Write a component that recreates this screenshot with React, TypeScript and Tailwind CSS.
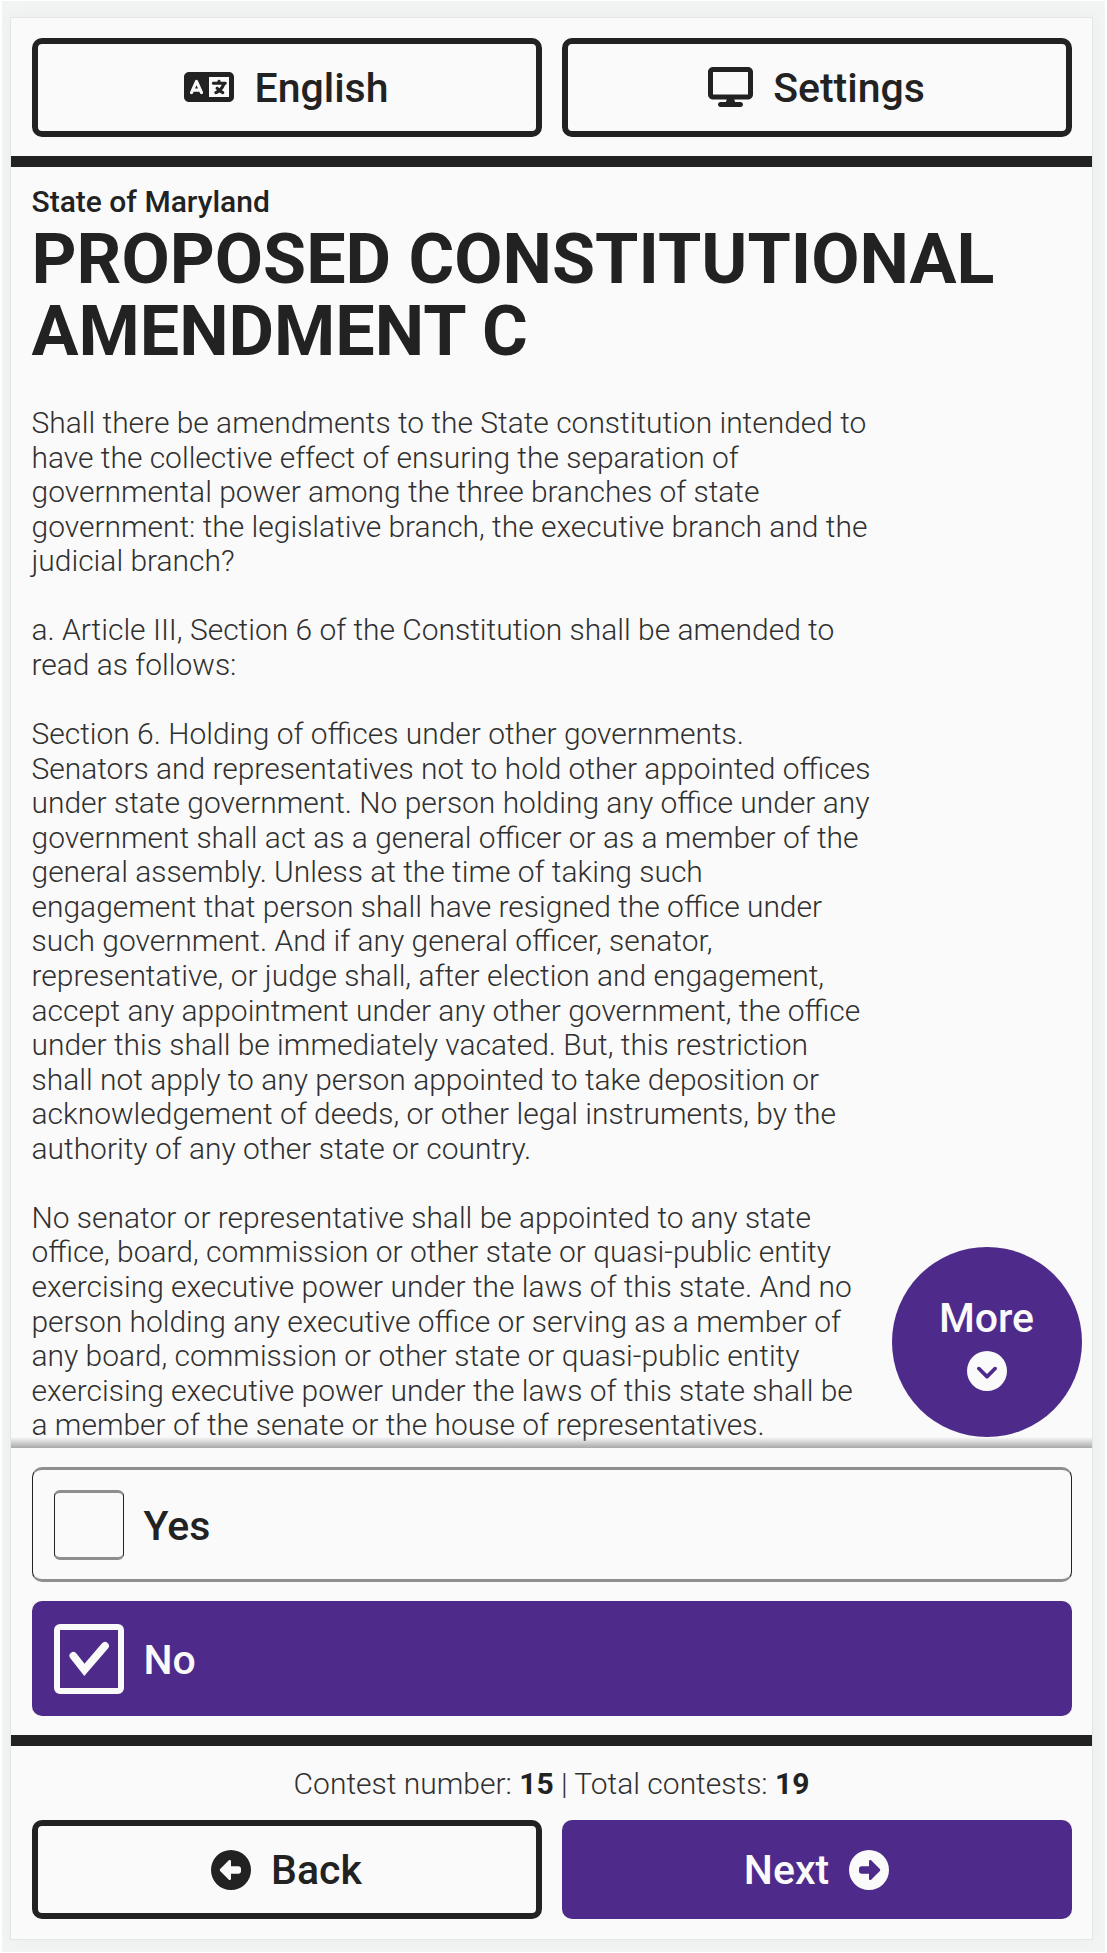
import { FaCircleChevronDown, FaCircleLeft, FaCircleRight, FaDisplay, FaLanguage } from "react-icons/fa6";

const paragraphs: string[][] = [
  [
    "Shall there be amendments to the State constitution intended to",
    "have the collective effect of ensuring the separation of",
    "governmental power among the three branches of state",
    "government: the legislative branch, the executive branch and the",
    "judicial branch?",
  ],
  ["a. Article III, Section 6 of the Constitution shall be amended to", "read as follows:"],
  [
    "Section 6. Holding of offices under other governments.",
    "Senators and representatives not to hold other appointed offices",
    "under state government. No person holding any office under any",
    "government shall act as a general officer or as a member of the",
    "general assembly. Unless at the time of taking such",
    "engagement that person shall have resigned the office under",
    "such government. And if any general officer, senator,",
    "representative, or judge shall, after election and engagement,",
    "accept any appointment under any other government, the office",
    "under this shall be immediately vacated. But, this restriction",
    "shall not apply to any person appointed to take deposition or",
    "acknowledgement of deeds, or other legal instruments, by the",
    "authority of any other state or country.",
  ],
  [
    "No senator or representative shall be appointed to any state",
    "office, board, commission or other state or quasi-public entity",
    "exercising executive power under the laws of this state. And no",
    "person holding any executive office or serving as a member of",
    "any board, commission or other state or quasi-public entity",
    "exercising executive power under the laws of this state shall be",
    "a member of the senate or the house of representatives.",
  ],
];

const buttonBase =
  "flex h-[99px] w-[510px] items-center justify-center gap-[20px] rounded-[10px] text-[41px] leading-none font-medium";
const outlined = "border-[6px] border-[#222222]";
const filled = "bg-[#4e2a8a] text-[#fafafa]";

function CheckMark() {
  return (
    <svg viewBox="0 0 58 58" className="size-[58px] shrink-0" fill="none" stroke="currentColor" strokeWidth="7.8" strokeLinecap="round">
      <path d="M13.4 25.9 24.4 39.8 45 15.9" />
    </svg>
  );
}

export default function App() {
  return (
    <div className="h-[1953px] w-[1107px] overflow-hidden bg-white px-[2px] pt-px pb-px font-['Roboto',sans-serif] text-[#222222]">
      <div className="h-full bg-[#f2f4f4] pt-[17px] pl-[9px]">
        <main className="flex h-[1921px] w-[1081px] flex-col bg-[#fafafa] shadow-[0_0_0_1px_#e4e5e5,0_0_18px_rgba(0,0,0,0.03)]">
          <header className="flex h-[149px] shrink-0 items-center justify-between border-b-[11px] border-[#222222] px-[20.5px]">
            <button className={`${buttonBase} ${outlined}`}>
              <FaLanguage className="h-[40px] w-[50px]" />
              <span className="pt-[3px]">English</span>
            </button>
            <button className={`${buttonBase} ${outlined}`}>
              <FaDisplay className="h-[40px] w-[45px]" />
              <span className="pt-[3px]">Settings</span>
            </button>
          </header>

          <section className="relative h-[1281px] shrink-0 overflow-hidden px-[20.5px] pt-[17px]">
            <p className="text-[30px] leading-[36px] font-medium">State of Maryland</p>
            <h1 className="mt-[3px] text-[70px] leading-[72px] font-bold whitespace-nowrap">
              PROPOSED CONSTITUTIONAL
              <br />
              AMENDMENT C
            </h1>
            <div className="mt-[39px] flex flex-col gap-[34.56px] text-[29.96px] leading-[34.56px] font-light whitespace-nowrap text-[#303030]">
              {paragraphs.map((lines) => (
                <p key={lines[0]}>
                  {lines.map((line) => (
                    <span key={line} className="block">
                      {line}
                    </span>
                  ))}
                </p>
              ))}
            </div>
            <div className="absolute inset-x-0 bottom-0 h-[11px] bg-linear-to-t from-[#a8a8a8] to-transparent" />
            <button className="absolute top-[1080px] left-[880.5px] flex size-[190px] flex-col items-center rounded-full bg-[#4e2a8a] pt-[50px] text-[#fafafa]">
              <span className="text-[41px] leading-[42px] font-medium">More</span>
              <FaCircleChevronDown className="mt-[11.5px] size-[40px]" />
            </button>
          </section>

          <section className="flex shrink-0 flex-col gap-[19px] px-[20.5px] pt-[19px] pb-[19px]">
            <button className="flex h-[115px] items-center gap-[20px] rounded-[10px] border-x-[1.5px] border-y-[3px] border-x-[#222222] border-y-[#8e8e8e] pl-[21px] text-[41px] leading-none font-medium">
              <span className="size-[70px] rounded-[6px] border-x-[1.5px] border-y-[3px] border-x-[#222222] border-y-[#8e8e8e] bg-[#fafafa]" />
              <span className="pt-[3px]">Yes</span>
            </button>
            <button className={`flex h-[115px] items-center gap-[20px] rounded-[10px] pl-[22px] text-[41px] leading-none font-medium ${filled}`}>
              <span className="flex size-[70px] items-center justify-center rounded-[6px] border-[6px] border-[#fafafa]">
                <CheckMark />
              </span>
              <span className="pt-[3px]">No</span>
            </button>
          </section>

          <footer className="flex grow flex-col border-t-[11px] border-[#222222] px-[20.5px] pt-[21px]">
            <p className="text-center text-[30px] leading-[34px] font-light text-[#303030]">
              Contest number: <b className="font-bold text-[#222222]">15</b> | Total contests:{" "}
              <b className="font-bold text-[#222222]">19</b>
            </p>
            <div className="mt-[19px] flex justify-between">
              <button className={`${buttonBase} ${outlined}`}>
                <FaCircleLeft className="size-[40px]" />
                <span className="pt-[2px]">Back</span>
              </button>
              <button className={`${buttonBase} ${filled}`}>
                <span className="pt-[2px]">Next</span>
                <FaCircleRight className="size-[40px]" />
              </button>
            </div>
          </footer>
        </main>
      </div>
    </div>
  );
}
